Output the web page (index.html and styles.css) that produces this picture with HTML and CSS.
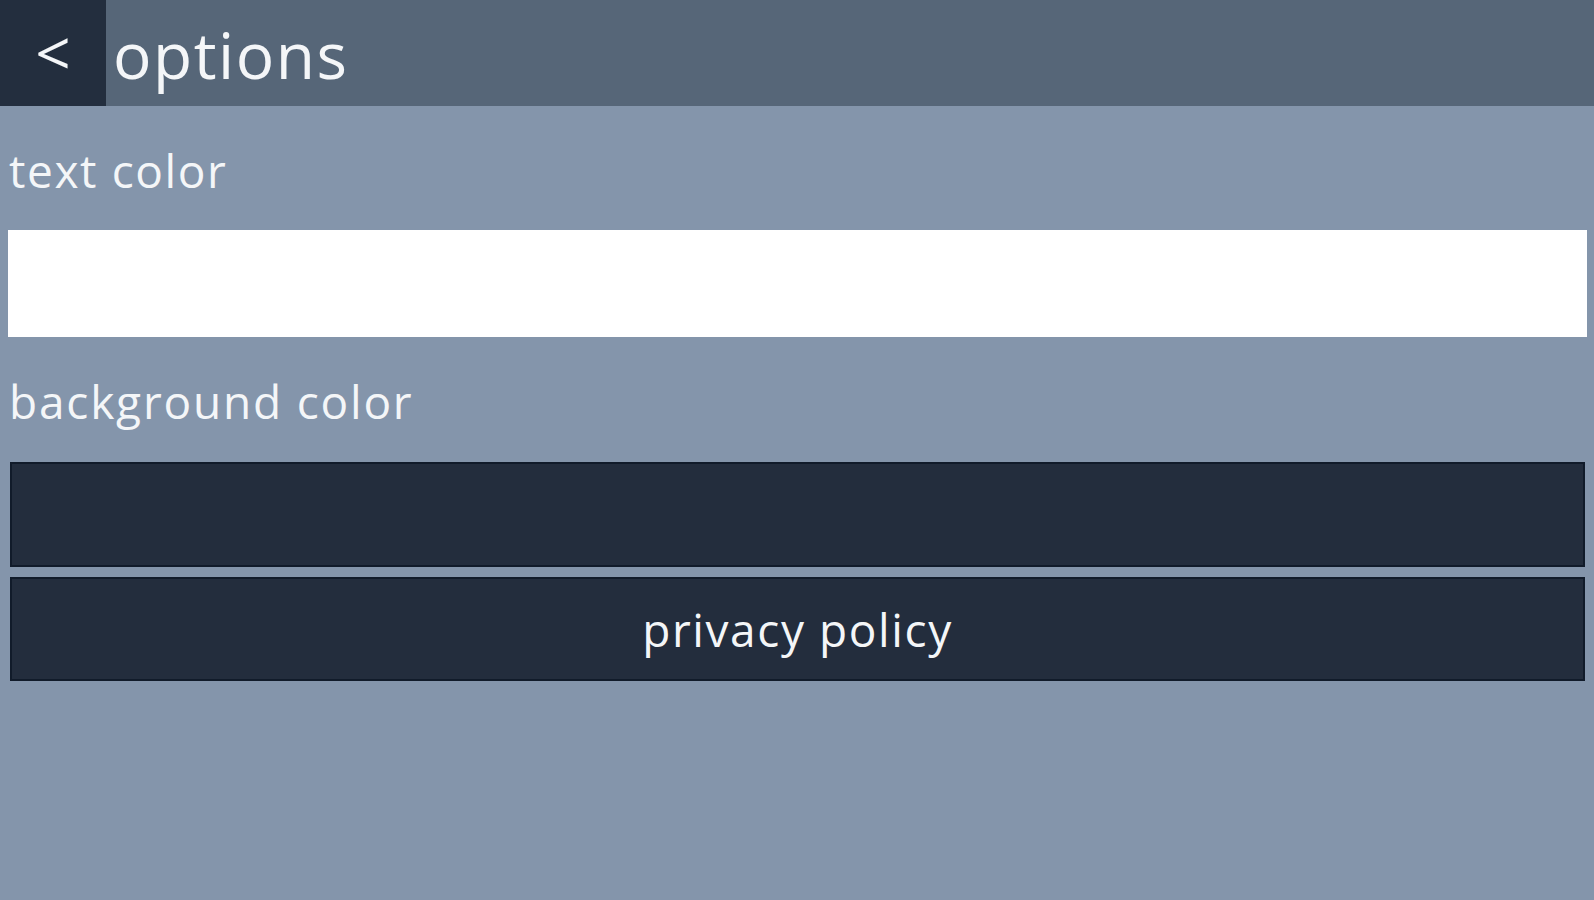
FILE: index.html
```html
<!DOCTYPE html>
<html>
<head>
<meta charset="utf-8">
<link rel="stylesheet" href="styles.css">
</head>
<body>
<header class="topbar">
  <div class="back">&lt;</div>
  <div class="title">options</div>
</header>
<main class="content">
  <div class="label label-first">text color</div>
  <div class="swatch swatch-white"></div>
  <div class="label label-second">background color</div>
  <div class="dark-box"></div>
  <div class="dark-box button">privacy policy</div>
</main>
</body>
</html>
```
FILE: styles.css
```css
html, body {
  margin: 0;
  padding: 0;
}
body {
  background: #8495ab;
  font-family: "Open Sans", "Noto Sans", sans-serif;
  color: #f4f6f8;
  height: 100vh;
}
.topbar {
  display: flex;
  height: 106px;
  background: #566678;
}
.back {
  width: 106px;
  background: #232e3e;
  display: flex;
  align-items: center;
  justify-content: center;
  font-size: 62px;
  padding-bottom: 2px;
  box-sizing: border-box;
}
.title {
  display: flex;
  align-items: center;
  padding-left: 7px;
  padding-top: 2px;
  font-size: 64px;
  letter-spacing: 1.5px;
}
.content {
  display: flex;
  flex-direction: column;
}
.label {
  font-size: 46px;
  line-height: 60px;
  padding-left: 9px;
  letter-spacing: 1.6px;
}
.label-first {
  margin-top: 34px;
}
.label-second {
  margin-top: 34px;
  letter-spacing: 1.8px;
}
.swatch-white {
  margin: 30px 7px 0 8px;
  height: 107px;
  background: #ffffff;
}
.dark-box {
  margin: 31px 9px 0 10px;
  height: 105px;
  box-sizing: border-box;
  background: #232d3d;
  border: 2px solid #111b2a;
}
.button {
  margin-top: 10px;
  height: 104px;
  display: flex;
  align-items: center;
  justify-content: center;
  font-size: 46px;
  letter-spacing: 1.6px;
}
```
